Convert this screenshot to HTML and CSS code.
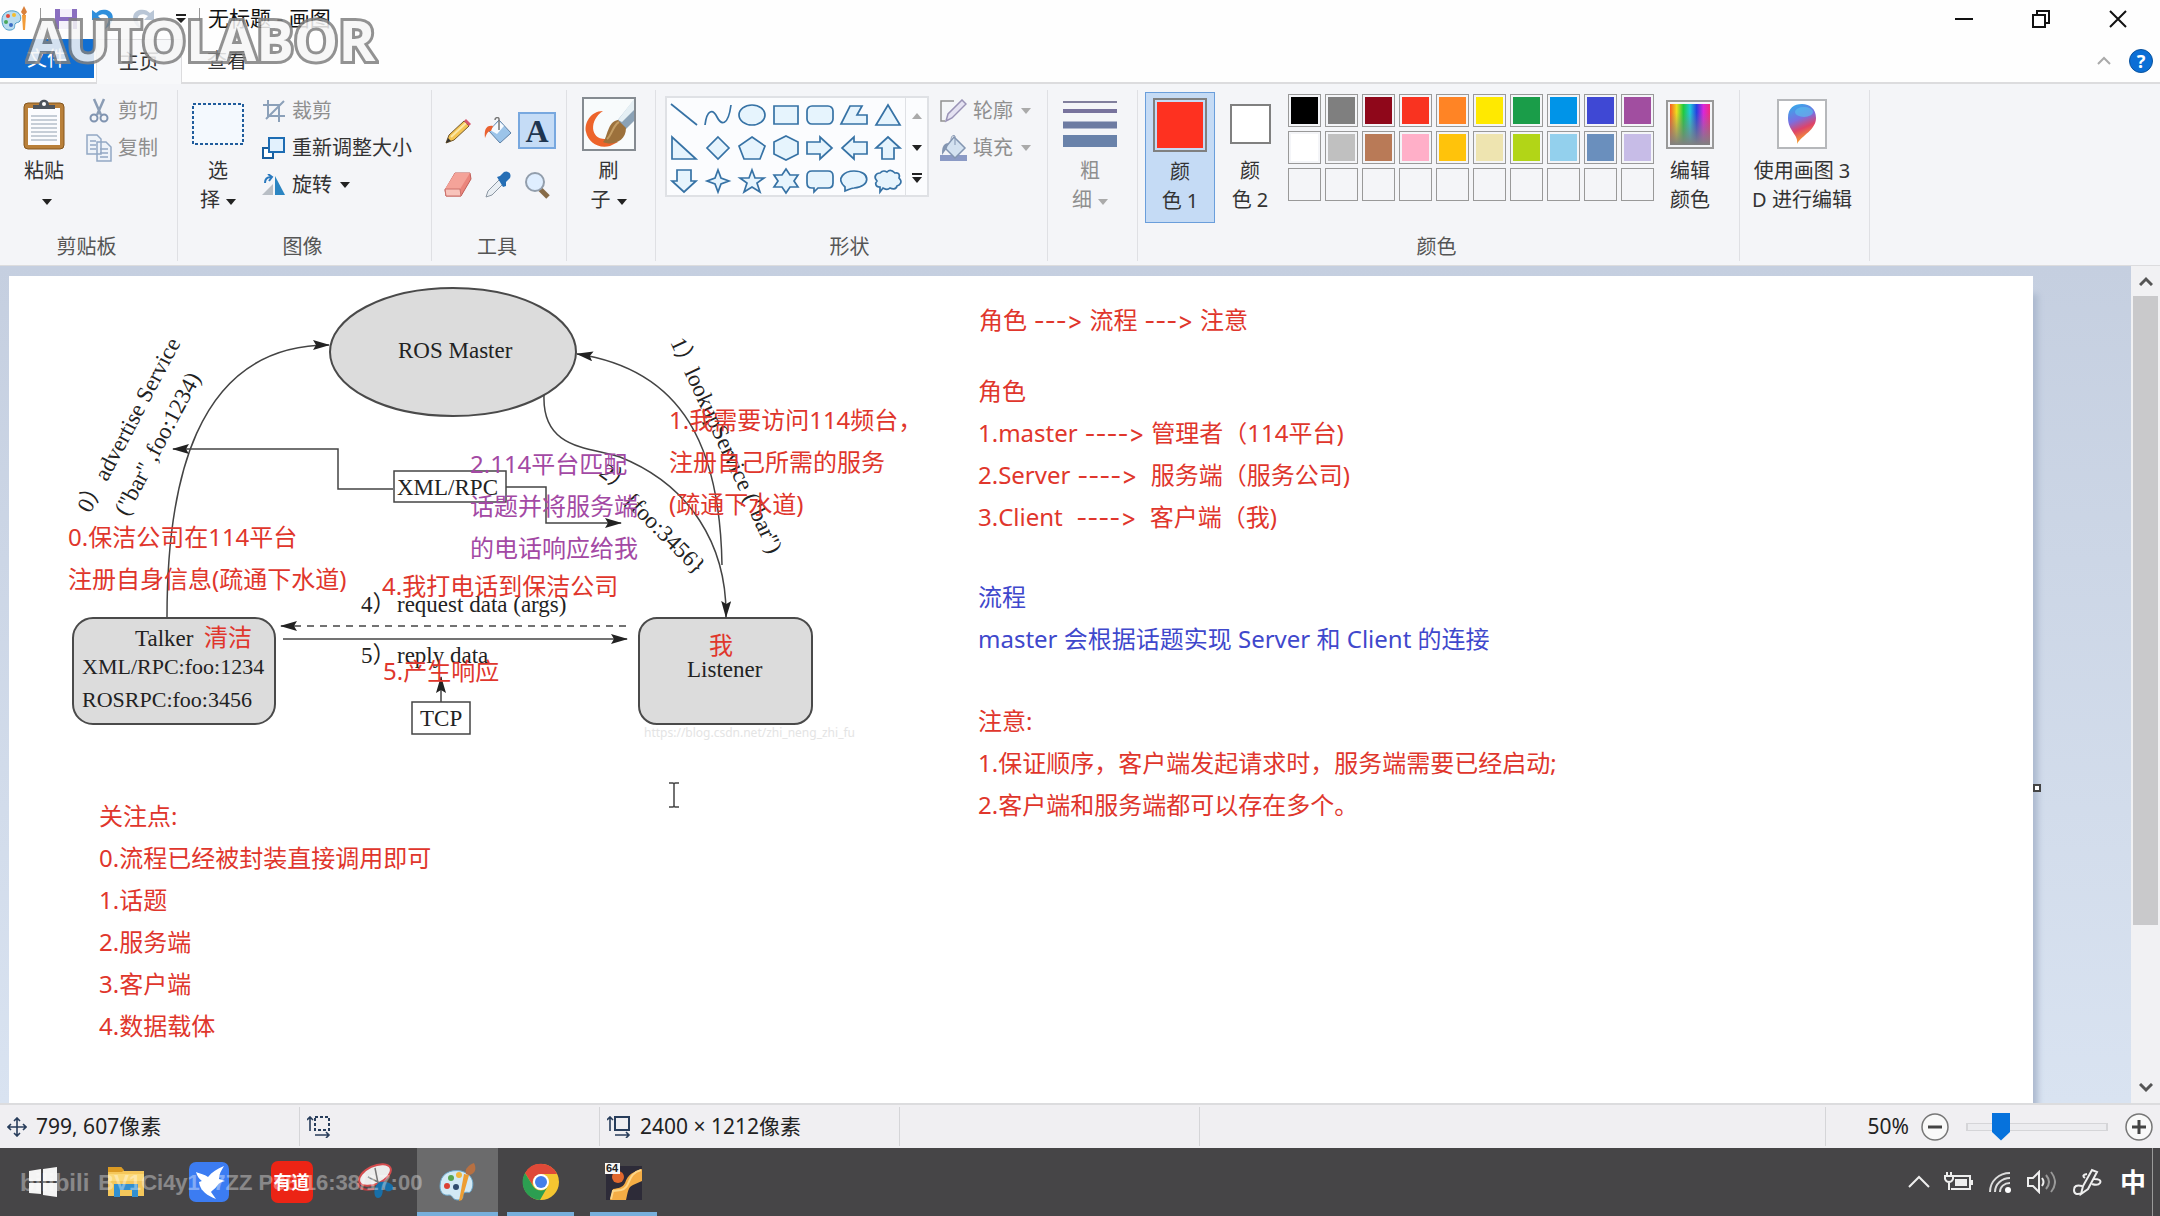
FILE: index.html
```html
<!DOCTYPE html>
<html lang="zh-CN">
<head>
  <meta charset="UTF-8">
  <title>无标题 - 画图</title>
  <link rel="stylesheet" href="styles.css">
</head>
<body>
  <div class="brand">AUTOLABOR</div>

  <header class="titlebar">
    <div class="quick">
      <svg class="app-icon" width="28" height="28" viewBox="0 0 28 28"><path d="M2 15C2 8 8 5 14 6c6 1 8 6 6 10-1 2-4 1-5 3s1 5-4 6C5 26 2 21 2 15z" fill="#b9dcef" stroke="#4e9cc6"/><circle cx="8" cy="11" r="2" fill="#e5493a"/><circle cx="14" cy="10" r="2" fill="#f5bd2c"/><circle cx="6" cy="17" r="2" fill="#4aa85b"/><circle cx="11" cy="20" r="2" fill="#3e6fc4"/><path d="M24 1l3 6-3 4-3-4z" fill="#d9803a"/><path d="M22 10h4l-1 15h-2z" fill="#f29c38"/></svg>
      <span class="bar"></span>
      <button aria-label="保存"><svg width="26" height="24" viewBox="0 0 26 24"><path d="M2 2h22v20H2z" fill="#8a6fc0"/><path d="M7 2h12v8H7zM6 14h14v8H6z" fill="#f4f1fa"/></svg></button>
      <button aria-label="撤消"><svg width="26" height="24" viewBox="0 0 26 24"><path d="M1 3v10h10L7 9c6-4 12-1 10 6l-3 7c9-5 11-16 2-19-5-1-8 0-11 3z" fill="#2f8fdc"/></svg></button>
      <button aria-label="重做"><svg width="26" height="24" viewBox="0 0 26 24"><path d="M25 3v10H15l4-4c-6-4-12-1-10 6l3 7C3 17 1 6 10 3c5-1 8 0 11 3z" fill="#b9c6d6"/></svg></button>
      <button aria-label="自定义" class="quick-more"><svg width="12" height="10" viewBox="0 0 12 10"><path d="M1 0h10v2H1zM1 4h10l-5 5z" fill="#222"/></svg></button>
      <span class="bar"></span>
    </div>
    <h1 class="title">无标题 - 画图</h1>
    <div class="window-buttons">
      <button aria-label="最小化"><svg width="18" height="18" viewBox="0 0 18 18"><path d="M0 9h18" stroke="#111" stroke-width="2"/></svg></button>
      <button aria-label="还原"><svg width="18" height="18" viewBox="0 0 18 18"><path d="M1 5h12v12H1zM5 5V1h12v12h-4" fill="none" stroke="#111" stroke-width="2"/></svg></button>
      <button aria-label="关闭"><svg width="18" height="18" viewBox="0 0 18 18"><path d="M1 1l16 16M17 1L1 17" stroke="#111" stroke-width="2"/></svg></button>
    </div>
  </header>

  <nav class="tabs">
    <button class="tab file">文件</button>
    <button class="tab active">主页</button>
    <button class="tab">查看</button>
    <div class="tab-tools">
      <button aria-label="折叠功能区"><svg width="14" height="10" viewBox="0 0 14 10"><path d="M1 8l6-6 6 6" fill="none" stroke="#aaa" stroke-width="2"/></svg></button>
      <button class="help">?</button>
    </div>
  </nav>

  <div class="ribbon">
    <section class="group clipboard">
      <div class="tools">
        <button class="big">
          <span class="pic"><svg width="42" height="52" viewBox="0 0 42 52"><rect x="1" y="5" width="40" height="46" rx="4" fill="#b9803a" stroke="#84561f"/><path d="M5 10h32v37H5z" fill="#fbfcfe"/><path d="M8 18h26M8 22h26M8 26h26M8 30h26M8 34h26M8 38h26M8 42h26" stroke="#b5bfca" stroke-width="1.4"/><path d="M10 11V7h6c0-7 10-7 10 0h6v4z" fill="#4d545c"/><circle cx="21" cy="6" r="2" fill="#fff"/></svg></span>
          粘贴<br><i class="arrow"></i>
        </button>
        <div class="stack">
          <button class="row off"><svg width="26" height="26" viewBox="0 0 26 26"><path d="M8 1l7 16M18 1l-7 16" stroke="#8b9db5" stroke-width="2.5"/><circle cx="8" cy="20" r="3.5" fill="none" stroke="#7f93b0" stroke-width="2"/><circle cx="18" cy="20" r="3.5" fill="none" stroke="#7f93b0" stroke-width="2"/></svg>剪切</button>
          <button class="row off"><svg width="26" height="28" viewBox="0 0 26 28"><path d="M1 1h10l4 4v15H1zM11 8h9l5 5v14H11z" fill="#eef3f9" stroke="#92a8c4" stroke-width="1.5"/><path d="M4 7h6M4 11h6M4 15h6M14 15h8M14 19h8M14 23h8" stroke="#92a8c4" stroke-width="1.5"/></svg>复制</button>
        </div>
      </div>
      <h2>剪贴板</h2>
    </section>

    <section class="group image">
      <div class="tools">
        <button class="big">
          <span class="pic"><svg width="52" height="42" viewBox="0 0 52 42"><rect x="1" y="1" width="50" height="40" fill="#f4f9fe" stroke="#205c9c" stroke-width="2" stroke-dasharray="3 2"/></svg></span>
          选<br>择<i class="arrow"></i>
        </button>
        <div class="stack">
          <button class="row off"><svg width="24" height="22" viewBox="0 0 24 22"><path d="M6 0v16h17M1 5h16v17M4 19L22 1" fill="none" stroke="#8ba0b9" stroke-width="2"/></svg>裁剪</button>
          <button class="row"><svg width="24" height="22" viewBox="0 0 24 22"><path d="M1 11h10v10H1z" fill="#fff" stroke="#175d9d" stroke-width="2"/><path d="M7 1h15v14H7z" fill="#e2f1fd" stroke="#1d6cb3" stroke-width="2"/></svg>重新调整大小</button>
          <button class="row"><svg width="24" height="22" viewBox="0 0 24 22"><path d="M13 2v19h10z" fill="#2b85c2"/><path d="M11 10v11H0z" fill="#b8bec5"/><path d="M3 9c0-4 2-6 6-6M6 0l4 3-3 4" fill="none" stroke="#2a79be" stroke-width="2"/></svg>旋转<i class="arrow"></i></button>
        </div>
      </div>
      <h2>图像</h2>
    </section>

    <section class="group draw">
      <div class="tools toolbox">
        <button aria-label="铅笔"><svg width="28" height="28" viewBox="0 0 28 28"><path d="M2 26l3-8L20 4l5 5L10 23z" fill="#f4c453" stroke="#72572b"/><path d="M7 20L22 6" stroke="#fbe7a6" stroke-width="2"/><path d="M20 4l2-2 5 5-2 2z" fill="#d7566b"/><path d="M2 26l2-5 3 3z" fill="#333"/></svg></button>
        <button aria-label="用颜色填充"><svg width="30" height="28" viewBox="0 0 30 28"><path d="M16 3l12 13-11 10L6 14z" fill="#9cc4e9" stroke="#5e81a6"/><path d="M16 4l5 5-7 8-7-4z" fill="#f5faff"/><path d="M16 13V2c0-2-4-2-4 1" fill="none" stroke="#777" stroke-width="1.5"/><path d="M10 9C3 8 1 13 2 21c1-2 2-7 6-7z" fill="#ea6130"/></svg></button>
        <button aria-label="文本" class="on"><span class="letter">A</span></button>
        <button aria-label="橡皮擦"><svg width="28" height="26" viewBox="0 0 28 26"><path d="M11 1h15l1 6-10 17H2l-1-6z" fill="#ea857c" stroke="#c15d57"/><path d="M11 1h15L16 17H1z" fill="#f4a399"/><path d="M1 17h15l1 7H2z" fill="#f8c3bb" stroke="#cd706a"/></svg></button>
        <button aria-label="颜色选取器"><svg width="28" height="28" viewBox="0 0 28 28"><path d="M2 26l2-6L15 9l4 4L8 24z" fill="#e9eef3" stroke="#8c97a3"/><path d="M13 6l3-1 4-4c4-2 8 2 6 6l-4 4v4l-3 1z" fill="#256eb5"/></svg></button>
        <button aria-label="放大镜"><svg width="28" height="28" viewBox="0 0 28 28"><path d="M17 18l8 8" stroke="#876b48" stroke-width="5"/><circle cx="12" cy="11" r="9" fill="#dfeeff" stroke="#929eac" stroke-width="2"/></svg></button>
      </div>
      <h2>工具</h2>
    </section>

    <section class="group brush">
      <div class="tools">
        <button class="big">
          <span class="pic"><svg width="54" height="54" viewBox="0 0 54 54"><path d="M1 1h52v52H1z" fill="#f8fbfc" stroke="#858b91" stroke-width="2"/><path d="M52 3L35 24l9 8 8-8z" fill="#8ba2b6"/><path d="M52 2L36 23l4 2L52 13z" fill="#e5eff4"/><path d="M21 14C8 14 2 27 4 35c2 10 12 17 24 14l8-4-13-3C8 42 7 23 21 14z" fill="#ed642b"/><path d="M21 45c5-5 4-20 15-22l8 8c0 14-14 18-23 14z" fill="#9c713c"/><path d="M25 42c5-4 6-14 12-17" fill="none" stroke="#c49d64" stroke-width="2"/></svg></span>
          刷<br>子<i class="arrow"></i>
        </button>
      </div>
    </section>

    <section class="group shapes">
      <div class="tools">
        <div class="gallery">
          <div class="shape-grid">
            <button aria-label="直线"><svg viewBox="0 0 28 24"><path d="M1 1l26 21"/></svg></button>
            <button aria-label="曲线"><svg viewBox="0 0 28 24"><path d="M1 22C3 6 9 6 13 14s11 10 14-12"/></svg></button>
            <button aria-label="椭圆形"><svg viewBox="0 0 28 24"><ellipse cx="14" cy="12" rx="13" ry="10"/></svg></button>
            <button aria-label="矩形"><svg viewBox="0 0 28 24"><path d="M2 3h24v18H2z"/></svg></button>
            <button aria-label="圆角矩形"><svg viewBox="0 0 28 24"><rect x="1" y="3" width="26" height="18" rx="5"/></svg></button>
            <button aria-label="多边形"><svg viewBox="0 0 28 24"><path d="M1 21L10 3h12l-5 9h10v9z"/></svg></button>
            <button aria-label="三角形"><svg viewBox="0 0 28 24"><path d="M14 2l12 20H2z"/></svg></button>
            <button aria-label="直角三角形"><svg viewBox="0 0 28 24"><path d="M2 1v22h24z"/></svg></button>
            <button aria-label="菱形"><svg viewBox="0 0 28 24"><path d="M14 1l11 11-11 11L3 12z"/></svg></button>
            <button aria-label="五边形"><svg viewBox="0 0 28 24"><path d="M14 1l13 9-5 13H6L1 10z"/></svg></button>
            <button aria-label="六边形"><svg viewBox="0 0 28 24"><path d="M14 0l12 6v12l-12 6-12-6V6z"/></svg></button>
            <button aria-label="右箭头"><svg viewBox="0 0 28 24"><path d="M1 6h13V1l12 11-12 11v-5H1z"/></svg></button>
            <button aria-label="左箭头"><svg viewBox="0 0 28 24"><path d="M27 6H14V1L2 12l12 11v-5h13z"/></svg></button>
            <button aria-label="上箭头"><svg viewBox="0 0 28 24"><path d="M8 23V12H2L14 1l12 11h-6v11z"/></svg></button>
            <button aria-label="下箭头"><svg viewBox="0 0 28 24"><path d="M7 1v11H2l12 11 12-11h-5V1z"/></svg></button>
            <button aria-label="四角星"><svg viewBox="0 0 28 24"><path d="M14 1l3 8 8 3-8 3-3 8-3-8-8-3 8-3z"/></svg></button>
            <button aria-label="五角星"><svg viewBox="0 0 28 24"><path d="M14 1l3 8h9l-7 5 3 9-8-5-8 5 3-9-7-5h9z"/></svg></button>
            <button aria-label="六角星"><svg viewBox="0 0 28 24"><path d="M14 0l4 6h8l-4 6 4 6h-8l-4 6-4-6H2l4-6-4-6h8z"/></svg></button>
            <button aria-label="圆角标注"><svg viewBox="0 0 28 24"><path d="M6 2h16q5 0 5 5v7q0 5-5 5H12l-4 4v-4H6q-5 0-5-5V7q0-5 5-5z"/></svg></button>
            <button aria-label="椭圆标注"><svg viewBox="0 0 28 24"><path d="M5 22v-4C-5 9 5 2 14 2c17 0 17 16 0 17-3 0-6 2-9 3z"/></svg></button>
            <button aria-label="云形标注"><svg viewBox="0 0 28 24"><path d="M6 4c3-3 5-2 7-1 3-3 6-1 8 1 4-1 5 2 4 5 4 4 1 7-2 8-1 4-5 3-7 2-3 3-5 1-7 0l-3 4v-5c-5 0-5-4-3-6-4-4-1-8 3-8z"/></svg></button>
          </div>
          <div class="gallery-scroll">
            <button aria-label="上一行"><i class="arrow up"></i></button>
            <button aria-label="下一行"><i class="arrow"></i></button>
            <button aria-label="全部形状"><i class="arrow lined"></i></button>
          </div>
        </div>
        <div class="stack">
          <button class="row off"><svg width="27" height="24" viewBox="0 0 27 24"><path d="M14 2H1v20h4" fill="none" stroke="#909090" stroke-width="1.5"/><path d="M6 22l2-7L22 1l4 4-14 14z" fill="#e5e2f2" stroke="#9a93b6" stroke-width="1.5"/></svg>轮廓<i class="arrow"></i></button>
          <button class="row off"><svg width="27" height="28" viewBox="0 0 27 28"><path d="M0 21h27v6H0z" fill="#8b9ac5"/><path d="M14 3l11 11-10 10L5 14z" fill="#d4e2f1" stroke="#8395b1" stroke-width="1.5"/><path d="M15 11V2c-3-2-4 2-4 4" fill="none" stroke="#8395b1"/><path d="M8 9c-6 1-6 6-6 12l5-7z" fill="#8395b1"/></svg>填充<i class="arrow"></i></button>
        </div>
      </div>
      <h2>形状</h2>
    </section>

    <section class="group size">
      <div class="tools">
        <button class="big off">
          <span class="pic"><svg width="54" height="48" viewBox="0 0 54 48"><path d="M0 2h54" stroke="#817f9d" stroke-width="2"/><path d="M0 11h54" stroke="#78739d" stroke-width="4"/><path d="M0 25h54" stroke="#6d7ba2" stroke-width="7"/><path d="M0 41h54" stroke="#6982aa" stroke-width="12"/></svg></span>
          粗<br>细<i class="arrow"></i>
        </button>
      </div>
    </section>

    <section class="group colors">
      <div class="tools">
        <button class="big color-one"><span class="pic"><span class="chip front"></span></span>颜<br>色 1</button>
        <button class="big color-two"><span class="pic"><span class="chip back"></span></span>颜<br>色 2</button>
        <div class="palette">
          <button class="black" aria-label="黑色"></button>
          <button class="gray" aria-label="灰色-50%"></button>
          <button class="darkred" aria-label="深红色"></button>
          <button class="red" aria-label="红色"></button>
          <button class="orange" aria-label="橙色"></button>
          <button class="yellow" aria-label="黄色"></button>
          <button class="green" aria-label="绿色"></button>
          <button class="turquoise" aria-label="青绿"></button>
          <button class="indigo" aria-label="靛青"></button>
          <button class="purple" aria-label="紫色"></button>
          <button class="white" aria-label="白色"></button>
          <button class="lightgray" aria-label="灰色-25%"></button>
          <button class="brown" aria-label="褐色"></button>
          <button class="rose" aria-label="玫瑰色"></button>
          <button class="gold" aria-label="金色"></button>
          <button class="lightyellow" aria-label="浅黄色"></button>
          <button class="lime" aria-label="酸橙色"></button>
          <button class="lightblue" aria-label="淡青绿色"></button>
          <button class="bluegray" aria-label="蓝灰色"></button>
          <button class="lavender" aria-label="淡紫色"></button>
          <button disabled></button>
          <button disabled></button>
          <button disabled></button>
          <button disabled></button>
          <button disabled></button>
          <button disabled></button>
          <button disabled></button>
          <button disabled></button>
          <button disabled></button>
          <button disabled></button>
        </div>
        <button class="big edit"><span class="pic"><span class="spectrum"></span></span>编辑<br>颜色</button>
      </div>
      <h2>颜色</h2>
    </section>

    <section class="group paint3d">
      <div class="tools">
        <button class="big">
          <span class="pic"><svg width="50" height="50" viewBox="0 0 50 50">
            <defs><linearGradient id="drop" x1="0" y1="0" x2="0.3" y2="1"><stop offset="0" stop-color="#29b5ec"/><stop offset=".45" stop-color="#796fe1"/><stop offset=".7" stop-color="#df4368"/><stop offset="1" stop-color="#f7a42d"/></linearGradient></defs>
            <path d="M1 1h48v48H1z" fill="#fff" stroke="#b6b8bb" stroke-width="2"/><path d="M20 45c2-9-9-13-9-26C11 9 17 5 25 5s14 5 14 14c0 12-14 17-19 26z" fill="url(#drop)"/><ellipse cx="27" cy="13" rx="9" ry="5" fill="#58c5ef" opacity=".6"/></svg></span>
          使用画图 3<br>D 进行编辑
        </button>
      </div>
    </section>
  </div>

  <main class="workspace">
    <div class="paper">
      <svg class="diagram" width="900" height="500" viewBox="9 276 900 500">
        <defs>
          <marker id="head" viewBox="0 0 18 10" refX="16" refY="5" markerWidth="18" markerHeight="10" markerUnits="userSpaceOnUse" orient="auto-start-reverse"><path d="M0 0l17 5-17 5 3-5z" fill="#222"/></marker>
        </defs>
        <g class="shape">
          <ellipse cx="453" cy="352" rx="123" ry="64"/>
          <rect x="73" y="618" width="202" height="106" rx="20"/>
          <rect x="639" y="618" width="173" height="106" rx="18"/>
        </g>
        <g class="wire">
          <path d="M167 617C167 490 192 345 329 345" marker-end="url(#head)"/>
          <path d="M577 354C685 370 720 450 722 565" marker-start="url(#head)"/>
          <path d="M544 395C542 450 590 447 620 457C690 485 727 545 726 617" marker-end="url(#head)"/>
          <path d="M393 489H338V449H173" marker-end="url(#head)"/>
          <path d="M506 487H546V523H621" marker-end="url(#head)"/>
          <path d="M626 626H281" stroke-dasharray="7 6" marker-end="url(#head)"/>
          <path d="M283 639H627" marker-end="url(#head)"/>
          <path d="M441 702V677" marker-end="url(#head)"/>
          <rect x="394" y="471" width="112" height="31"/>
          <rect x="412" y="702" width="58" height="32"/>
        </g>
        <g class="label">
          <text x="398" y="358">ROS Master</text>
          <text x="397" y="495">XML/RPC</text>
          <text x="135" y="646">Talker</text>
          <text class="small" x="82" y="674">XML/RPC:foo:1234</text>
          <text class="small" x="82" y="707">ROSRPC:foo:3456</text>
          <text x="687" y="677">Listener</text>
          <text x="420" y="726">TCP</text>
          <text x="361" y="612">4）</text>
          <text x="397" y="612">request data (args)</text>
          <text x="361" y="663">5）</text>
          <text x="397" y="663">reply data</text>
          <g transform="translate(90 514) rotate(-62)"><text>0）</text><text x="36">advertise Service</text></g>
          <g transform="translate(127 517) rotate(-62)"><text>("bar" ,foo:1234)</text></g>
          <g transform="translate(670 342) rotate(65)"><text>1）</text><text x="33">lookupService ("bar")</text></g>
          <g transform="translate(598 475) rotate(36)"><text>2）</text></g>
          <g transform="translate(622 501) rotate(45)"><text>{foo:3456}</text></g>
        </g>
        <text class="source" x="644" y="737">https://blog.csdn.net/zhi_neng_zhi_fu</text>
      </svg>

      <p class="note n0">0.保洁公司在114平台<br>注册自身信息(疏通下水道)</p>
      <p class="note n1">1.我需要访问114频台，<br>注册自己所需的服务<br>(疏通下水道)</p>
      <p class="note n2">2.114平台匹配<br>话题并将服务端<br>的电话响应给我</p>
      <p class="note n4">4.我打电话到保洁公司</p>
      <p class="note n5">5.产生响应</p>
      <p class="note talker">清洁</p>
      <p class="note listener">我</p>
      <p class="note focus">关注点:<br>0.流程已经被封装直接调用即可<br>1.话题<br>2.服务端<br>3.客户端<br>4.数据载体</p>

      <p class="note outline">角色<span class="to"> ---&gt; </span>流程<span class="to"> ---&gt; </span>注意</p>
      <p class="note roles">角色<br>1.master<span class="to"> ----&gt; </span>管理者（114平台)<br>2.Server<span class="to"> ----&gt;&nbsp; </span>服务端（服务公司)<br>3.Client<span class="to"> &nbsp;----&gt;&nbsp; </span>客户端（我)</p>
      <p class="note flow">流程<br>master 会根据话题实现 Server 和 Client 的连接</p>
      <p class="note care">注意:<br>1.保证顺序，客户端发起请求时，服务端需要已经启动;<br>2.客户端和服务端都可以存在多个。</p>

      <svg class="cursor" width="14" height="28" viewBox="0 0 14 28"><path d="M2 2h4l1 1 1-1h4M7 3v22M2 26h4l1-1 1 1h4" fill="none" stroke="#444" stroke-width="1.5"/></svg>
      <span class="handle"></span>
    </div>
    <div class="scrollbar">
      <button aria-label="向上滚动"><svg width="14" height="10" viewBox="0 0 14 10"><path d="M1 9l6-6 6 6" fill="none" stroke="#555" stroke-width="3"/></svg></button>
      <div class="track"><div class="thumb"></div></div>
      <button aria-label="向下滚动"><svg width="14" height="10" viewBox="0 0 14 10"><path d="M1 1l6 6 6-6" fill="none" stroke="#555" stroke-width="3"/></svg></button>
    </div>
  </main>

  <footer class="status">
    <div class="cell"><svg width="20" height="20" viewBox="0 0 20 20"><path d="M10 1v18M1 10h18M7 4l3-3 3 3M7 16l3 3 3-3M4 7l-3 3 3 3M16 7l3 3-3 3" fill="none" stroke="#283d5b" stroke-width="1.6"/></svg>799, 607像素</div>
    <div class="cell"><svg width="24" height="22" viewBox="0 0 24 22"><path d="M3 15V1M0 4l3-3 3 3M8 19h14M19 16l3 3-3 3" fill="none" stroke="#283d5b" stroke-width="1.6"/><path d="M8 1h14v13H8z" fill="none" stroke="#283d5b" stroke-width="2" stroke-dasharray="3 2"/></svg></div>
    <div class="cell"><svg width="24" height="22" viewBox="0 0 24 22"><path d="M3 15V1M0 4l3-3 3 3M8 19h14M19 16l3 3-3 3" fill="none" stroke="#283d5b" stroke-width="1.6"/><path d="M8 1h14v13H8z" fill="none" stroke="#283d5b" stroke-width="2"/></svg>2400 × 1212像素</div>
    <div class="cell"></div>
    <div class="cell last"></div>
    <div class="zoom">
      <label for="zoom">50%</label>
      <button aria-label="缩小"><svg width="28" height="28" viewBox="0 0 28 28"><circle cx="14" cy="14" r="13" fill="#f9f9f9" stroke="#777" stroke-width="1.5"/><path d="M7 14h14" stroke="#444" stroke-width="3"/></svg></button>
      <input type="range" id="zoom" min="0" max="100" value="20">
      <button aria-label="放大"><svg width="28" height="28" viewBox="0 0 28 28"><circle cx="14" cy="14" r="13" fill="#f9f9f9" stroke="#777" stroke-width="1.5"/><path d="M7 14h14M14 7v14" stroke="#444" stroke-width="3"/></svg></button>
    </div>
  </footer>

  <div class="taskbar">
    <div class="apps">
      <button aria-label="开始"><svg width="28" height="30" viewBox="0 0 28 30"><path d="M0 4l12-2v12H0zM14 2l14-2v14H14zM0 16h12v11L0 26zM14 16h14v14l-14-2z" fill="#f4f4f4"/></svg></button>
      <button aria-label="文件资源管理器"><svg width="38" height="34" viewBox="0 0 38 34"><path d="M1 2h13l3 4h20v25H1z" fill="#f5c75b"/><path d="M1 2h13l3 3-2 2H1z" fill="#dc9b23"/><path d="M7 19h24v13h-6v-7H13v7H7z" fill="#328fd0"/><path d="M1 9h36v7H1z" fill="#fbd978"/></svg></button>
      <button aria-label="飞书"><svg width="42" height="42" viewBox="0 0 42 42"><rect x="1" y="1" width="40" height="40" rx="7" fill="#3c7cf2"/><path d="M8 11c5 2 8 2 12 5 4-5 9-8 16-11-3 5-5 8-5 13l6 2c-4 1-6 2-8 5s-5 4-6 6l5 7c-8-3-16-8-17-17l3-1c-3-2-5-5-6-9z" fill="#fff"/></svg></button>
      <button aria-label="有道"><span class="youdao">有道</span></button>
      <button aria-label="截图工具"><svg width="40" height="38" viewBox="0 0 40 38"><ellipse cx="20" cy="12" rx="17" ry="9" transform="rotate(-25 20 12)" fill="#ececec" stroke="#d54c4e" stroke-width="2"/><path d="M20 5l3 15M13 14l20 10" stroke="#777" stroke-width="1.5"/><path d="M25 19c-7 3-7 16-2 16 4 0 6-6 4-14 2 8 7 9 11 5 2-4-5-8-13-7z" fill="#176fa9"/><path d="M3 20c1 6 7 8 16 6" fill="none" stroke="#b84144" stroke-width="2"/></svg></button>
      <button aria-label="画图" class="current"><svg width="40" height="40" viewBox="0 0 40 40"><path d="M2 24C2 12 12 7 23 9c12 3 14 13 10 20-2 3-4 0-7 2s2 6-6 7c-6 0-5-5-9-5-5 1-9-2-9-9z" fill="#d2e9f5" stroke="#6aa6ca"/><circle cx="9" cy="24" r="3" fill="#db4135"/><circle cx="13" cy="16" r="3" fill="#57a651"/><circle cx="21" cy="13" r="3" fill="#f0b73c"/><circle cx="18" cy="25" r="3" fill="#304c6e"/><path d="M26 12l5 1-7 25-3 1z" fill="#ed9d32"/><path d="M28 12c-2-5 3-9 8-11 3 6 1 11-5 12z" fill="#b77042"/></svg></button>
      <button aria-label="Chrome" class="open"><svg width="38" height="40" viewBox="0 0 38 40"><circle cx="19" cy="20" r="18" fill="#f4c531"/><path d="M3 11a18 18 0 0 1 32 1H19a9 9 0 0 0-8 12z" fill="#df4938"/><path d="M3 11a18 18 0 0 0 15 27l8-14c-3 6-11 6-15 0z" fill="#2c9e51"/><circle cx="19" cy="20" r="8" fill="#fff"/><circle cx="19" cy="20" r="6" fill="#447fe8"/></svg></button>
      <button aria-label="虚拟机" class="open"><svg width="40" height="40" viewBox="0 0 40 40"><path d="M2 4h36v34H2z" fill="#2d2b38"/><circle cx="14" cy="15" r="6" fill="#e2682d"/><path d="M38 7v12l-9 4c-5 2-5 7-7 15H6l3-11c6-1 9-1 12-6 3-9 8-11 17-14z" fill="#f4ad45"/><path d="M37 8c-15 4-9 17-20 20l-8 1-2 8" fill="none" stroke="#fcd688" stroke-width="2"/><path d="M1 1h15v11H1z" fill="#f7f7f7"/><text x="2" y="10" class="tiny">64</text></svg></button>
    </div>
    <div class="tray">
      <button aria-label="显示隐藏的图标"><svg width="22" height="14" viewBox="0 0 22 14"><path d="M1 12L11 2l10 10" fill="none" stroke="#eee" stroke-width="2"/></svg></button>
      <button aria-label="电池"><svg width="30" height="22" viewBox="0 0 30 22"><path d="M9 5h17v13H7" fill="none" stroke="#eee" stroke-width="2"/><path d="M11 8h12v7H11zM27 9h2v5h-2z" fill="#eee"/><path d="M3 1v4M7 1v4M1 5h8v3q-1 3-4 3t-4-3zM5 11v8" fill="none" stroke="#eee" stroke-width="2"/></svg></button>
      <button aria-label="网络"><svg width="24" height="24" viewBox="0 0 24 24"><path d="M2 22C2 11 11 3 22 3M7 22c0-8 7-14 15-14M12 22c0-5 4-9 10-9" fill="none" stroke="#ddd" stroke-width="2"/><circle cx="20" cy="20" r="3" fill="#fff"/></svg></button>
      <button aria-label="音量"><svg width="30" height="24" viewBox="0 0 30 24"><path d="M2 8h5l6-6v20l-6-6H2z" fill="none" stroke="#eee" stroke-width="2"/><path d="M16 8q3 4 0 8" fill="none" stroke="#eee" stroke-width="2"/><path d="M20 5q6 7 0 14M25 2q8 10 0 20" fill="none" stroke="#999" stroke-width="2"/></svg></button>
      <button aria-label="手写笔" class="pen"><svg width="30" height="28" viewBox="0 0 30 28"><path d="M9 26l2-8L20 2l5 2-9 17zM10 18q-8-2-8 4 0 6 8 3M22 11q8 0 6 4-2 3-8 1M13 10q-4-3 2-4" fill="none" stroke="#eee" stroke-width="2"/></svg></button>
      <button class="ime">中</button>
      <span class="desktop"></span>
    </div>
    <!-- video player mark over the task buttons -->
    <div class="stamp"><span class="stamp-logo">bilibili</span><span>BV1Ci4y1L7ZZ P88 16:38/17:00</span></div>
  </div>
</body>
</html>
```
FILE: styles.css
```css
* {
  box-sizing: border-box;
}

body {
  margin: 0;
  height: 100vh;
  display: flex;
  flex-direction: column;
  overflow: hidden;
  background: #fefefe;
  color: #333;
  font-family: "Noto Sans", "Noto Sans CJK SC", sans-serif;
  font-size: 20px;
  line-height: 29px;
  white-space: nowrap;
}

button {
  margin: 0;
  padding: 0;
  border: 0;
  background: none;
  color: inherit;
  font: inherit;
}

h1, h2, p {
  margin: 0;
  font-weight: normal;
}

svg {
  display: block;
  flex: none;
}

.brand {
  position: absolute;
  left: 28px;
  top: 8px;
  z-index: 5;
  font: bold 56px/62px "Open Sans", sans-serif;
  color: #f6f6f6;
  -webkit-text-stroke: 6px #808080;
  paint-order: stroke fill;
  opacity: .85;
}

/* title bar */
.titlebar {
  display: flex;
  align-items: center;
  height: 37px;
}

.quick {
  display: flex;
  align-items: center;
  gap: 12px;
  width: 208px;
}

.quick .bar {
  width: 1px;
  height: 22px;
  background: #999;
}

.quick-more {
  margin-left: 8px;
}

.title {
  font-size: 21px;
  color: #111;
}

.window-buttons {
  display: flex;
  margin-left: auto;
  margin-right: 4px;
}

.window-buttons button {
  display: flex;
  justify-content: center;
  width: 77px;
}

/* tabs */
.tabs {
  display: flex;
  height: 47px;
  padding-top: 2px;
  border-bottom: 2px solid #dcdcde;
}

.tab {
  width: 90px;
  height: 43px;
}

.tab.file {
  width: 94px;
  height: 39px;
  margin-right: 2px;
  background: #116ed1;
  color: #fff;
}

.tab.active {
  width: 86px;
  height: 45px;
  padding-bottom: 2px;
  background: #f7f8fa;
  border: 1px solid #dcdcde;
  border-bottom: 0;
}

.tab-tools {
  display: flex;
  align-items: center;
  gap: 18px;
  margin-left: auto;
  padding-right: 7px;
}

.help {
  width: 24px;
  height: 24px;
  border-radius: 50%;
  background: #0b6fd6;
  border: 1px solid #0a539e;
  color: #fff;
  font-size: 18px;
  line-height: 22px;
  font-weight: bold;
}

/* ribbon */
.ribbon {
  display: flex;
  height: 182px;
  background: #f4f5f8;
  border-bottom: 1px solid #dcdcde;
}

.group {
  flex: none;
  display: flex;
  flex-direction: column;
  margin: 6px 0 4px;
  padding-top: 2px;
  border-right: 1px solid #dfe0e4;
}

.group h2 {
  margin-top: 9px;
  padding-right: 4px;
  font-size: 20px;
  text-align: center;
  color: #555;
}

.tools {
  display: flex;
  height: 131px;
}

.clipboard { width: 178px; }
.image { width: 254px; }
.draw { width: 135px; }
.brush { width: 89px; }
.shapes { width: 392px; }
.size { width: 90px; }
.colors { width: 602px; }
.paint3d { width: 130px; }

.clipboard .tools {
  padding-left: 12px;
  gap: 10px;
}

.image .tools {
  padding-left: 12px;
  gap: 16px;
}

.brush .tools, .size .tools, .paint3d .tools {
  justify-content: center;
  padding-right: 5px;
}

.shapes .tools {
  padding-left: 9px;
  gap: 11px;
}

.colors .tools {
  padding-left: 7px;
  gap: 2px;
}

.big {
  display: block;
  width: 64px;
  height: 131px;
  padding-bottom: 9px;
  text-align: center;
}

.image .big {
  width: 56px;
}

.pic {
  display: flex;
  align-items: center;
  justify-content: center;
  height: 64px;
}

.paint3d .big {
  width: 120px;
}

.stack {
  display: flex;
  flex-direction: column;
}

.row {
  display: flex;
  align-items: center;
  gap: 6px;
  height: 37px;
}

.off {
  color: #8f8f8f;
}

.arrow {
  display: inline-block;
  vertical-align: middle;
  border: 5px solid transparent;
  border-top: 6px solid #222;
  border-bottom: 0;
}

.big .arrow {
  margin-left: 6px;
}

.row .arrow {
  margin-left: 2px;
}

.off .arrow {
  border-top-color: #aaa;
}

.arrow.up {
  border-top: 0;
  border-bottom: 6px solid #aaa;
}

.toolbox {
  display: grid;
  grid-template-columns: 40px 40px 38px;
  grid-template-rows: 37px 37px;
  row-gap: 17px;
  padding: 20px 0 0 6px;
}

.toolbox button {
  display: flex;
  align-items: center;
  justify-content: center;
}

.toolbox .on {
  background: #c5dcf6;
  border: 2px solid #78a8df;
}

.letter {
  font: bold 32px/32px "Liberation Serif", serif;
  color: #1e3550;
}

.gallery {
  display: flex;
  width: 264px;
  height: 101px;
  margin-top: 4px;
  border: 2px solid #dfe1e5;
  background: #fbfcfe;
}

.shape-grid {
  display: grid;
  grid-template-columns: repeat(7, 34px);
  grid-template-rows: repeat(3, 33px);
  width: 238px;
}

.shape-grid button {
  display: flex;
  align-items: center;
  justify-content: center;
}

.shape-grid svg {
  width: 28px;
  height: 24px;
  overflow: visible;
  fill: #e6f4fd;
  stroke: #3672a5;
  stroke-width: 1.7;
}

.shape-grid button:nth-child(-n+2) svg {
  fill: none;
}

.gallery-scroll {
  flex: 1;
  display: grid;
  border-left: 1px solid #dfe1e5;
}

.gallery-scroll button {
  line-height: 20px;
}

.lined {
  position: relative;
}

.lined::before {
  content: "";
  position: absolute;
  left: -5px;
  top: -10px;
  width: 10px;
  height: 2px;
  background: #222;
}

.color-one {
  width: 70px;
  background: #c5dbf5;
  border: 1px solid #6a9edb;
}

.color-two {
  width: 66px;
}

.edit {
  width: 68px;
}

.chip {
  border: 2px solid #808080;
}

.front {
  width: 54px;
  height: 54px;
  padding: 2px;
  background: #fe3120 content-box;
}

.back {
  width: 41px;
  height: 40px;
  background: #fff;
}

.palette {
  display: grid;
  grid-template-columns: repeat(10, 33px);
  grid-auto-rows: 33px;
  gap: 4px;
  padding: 2px 0 0 3px;
}

.palette button {
  padding: 2px;
  border: 1px solid #999;
  background-clip: content-box;
}

.black { background-color: #000; }
.gray { background-color: #7f7f7f; }
.darkred { background-color: #8f071a; }
.red { background-color: #f93320; }
.orange { background-color: #ff8425; }
.yellow { background-color: #ffe900; }
.green { background-color: #1a9d49; }
.turquoise { background-color: #0094e8; }
.indigo { background-color: #3f48d4; }
.purple { background-color: #a14ea0; }
.white { background-color: #fff; }
.lightgray { background-color: #c0c0c0; }
.brown { background-color: #b97a57; }
.rose { background-color: #ffafc8; }
.gold { background-color: #ffc30b; }
.lightyellow { background-color: #eee4b0; }
.lime { background-color: #b2d517; }
.lightblue { background-color: #93d0ed; }
.bluegray { background-color: #6a8fbd; }
.lavender { background-color: #c7bce7; }

.spectrum {
  width: 48px;
  height: 49px;
  padding: 2px;
  border: 2px solid #999;
  background:
    linear-gradient(transparent 20%, #808080) content-box,
    linear-gradient(90deg, #f75a24, #efdf1f, #20ca3e, #20c9d8, #263fe1, #d927dc, #f02e79) content-box;
}

/* drawing area */
.workspace {
  flex: 1;
  display: flex;
  min-height: 0;
  overflow: hidden;
  background: linear-gradient(#c5cfe0, #d9e3f1);
}

.paper {
  flex: 1;
  position: relative;
  margin: 10px 98px 0 9px;
  background: #fff;
  box-shadow: 9px 14px 6px -4px #adbacf;
}

.diagram .shape {
  fill: #dcdcdc;
  stroke: #4a4a4a;
  stroke-width: 2;
}

.diagram .wire {
  fill: none;
  stroke: #444;
  stroke-width: 1.5;
}

.label {
  font-family: "Liberation Serif", "Noto Sans CJK SC", serif;
  font-size: 23px;
  fill: #222;
}

.label .small {
  font-size: 22px;
}

.source {
  font-size: 12px;
  fill: #e4e4e4;
}

.note {
  position: absolute;
  font-size: 24px;
  line-height: 42px;
  color: #e0362c;
}

/* keep the typed dashes apart, Inter joins them into an arrow */
.to {
  font-family: Inter, sans-serif;
  font-feature-settings: "calt" 0;
  font-variant-ligatures: none;
  line-height: 24px;
}

.n0 { left: 59px; top: 240px; }
.n1 { left: 660px; top: 123px; }
.n2 { left: 461px; top: 167px; color: #a349a4; }
.n4 { left: 373px; top: 289px; }
.n5 { left: 374px; top: 374px; }
.talker { left: 195px; top: 340px; }
.listener { left: 700px; top: 348px; }
.focus { left: 90px; top: 519px; }
.outline { left: 970px; top: 23px; }
.roles { left: 969px; top: 94px; }
.flow { left: 969px; top: 300px; color: #3f48cc; }
.care { left: 969px; top: 424px; }

.cursor {
  position: absolute;
  left: 658px;
  top: 505px;
}

.handle {
  position: absolute;
  right: -8px;
  top: 508px;
  width: 8px;
  height: 8px;
  background: #fff;
  border: 2px solid #444;
}

.scrollbar {
  display: flex;
  flex-direction: column;
  width: 29px;
  margin-left: auto;
  background: #f1f1f3;
}

.scrollbar button {
  display: flex;
  align-items: center;
  justify-content: center;
  height: 30px;
}

.track {
  flex: 1;
  padding: 0 2px;
}

.thumb {
  height: 81%;
  background: #c9c9cb;
}

/* status bar */
.status {
  display: flex;
  height: 45px;
  background: #f0eff2;
  border-top: 2px solid #dcdcde;
  color: #222;
  font-size: 21px;
}

.cell {
  display: flex;
  align-items: center;
  gap: 9px;
  width: 300px;
  margin: 2px 0;
  padding-left: 7px;
  border-right: 1px solid #d5d5d8;
}

.cell.last {
  flex: 1;
}

.zoom {
  display: flex;
  align-items: center;
  gap: 17px;
  padding: 0 7px 0 42px;
}

.zoom label {
  margin-right: -5px;
}

.zoom input {
  appearance: none;
  width: 142px;
  height: 28px;
  margin: 0;
  background: linear-gradient(#d5d5d8, #d5d5d8) center / 100% 8px no-repeat;
}

.zoom input::-webkit-slider-runnable-track {
  height: 6px;
  background: #ececef;
  margin: 0 2px;
}

.zoom input::-webkit-slider-thumb {
  appearance: none;
  width: 18px;
  height: 28px;
  margin-top: -11px;
  background: #0672dc;
  clip-path: polygon(0 0, 100% 0, 100% 70%, 50% 100%, 0 70%);
}

/* taskbar */
.taskbar {
  position: relative;
  display: flex;
  justify-content: space-between;
  height: 68px;
  background: #464547;
}

.apps {
  display: flex;
  gap: 2px;
  padding-left: 2px;
}

.apps button {
  position: relative;
  display: flex;
  align-items: center;
  justify-content: center;
  width: 81px;
}

.apps .current {
  background: #6b6b6c;
}

.current::after, .open::after {
  content: "";
  position: absolute;
  left: 0;
  right: 0;
  bottom: 0;
  height: 4px;
  background: #77afdc;
}

.open::after {
  left: 7px;
  right: 7px;
}

.youdao {
  width: 42px;
  height: 42px;
  border-radius: 7px;
  background: #ec2415;
  color: #fff;
  font-size: 18px;
  line-height: 42px;
  font-weight: bold;
}

.tiny {
  font: bold 11px "Liberation Sans", sans-serif;
  fill: #222;
}

.tray {
  display: flex;
  align-items: center;
  gap: 14px;
}

.pen {
  margin-left: 2px;
}

.ime {
  margin: 0 -8px 0 4px;
  color: #fff;
  font-size: 26px;
  font-weight: bold;
}

.desktop {
  align-self: stretch;
  width: 8px;
  border-left: 1px solid #999;
}

.stamp {
  position: absolute;
  left: 20px;
  top: 19px;
  display: flex;
  align-items: flex-end;
  gap: 9px;
  color: #fff;
  opacity: .36;
  font: bold 22px/32px "Liberation Sans", sans-serif;
}

.stamp-logo {
  font-size: 24px;
}
```
